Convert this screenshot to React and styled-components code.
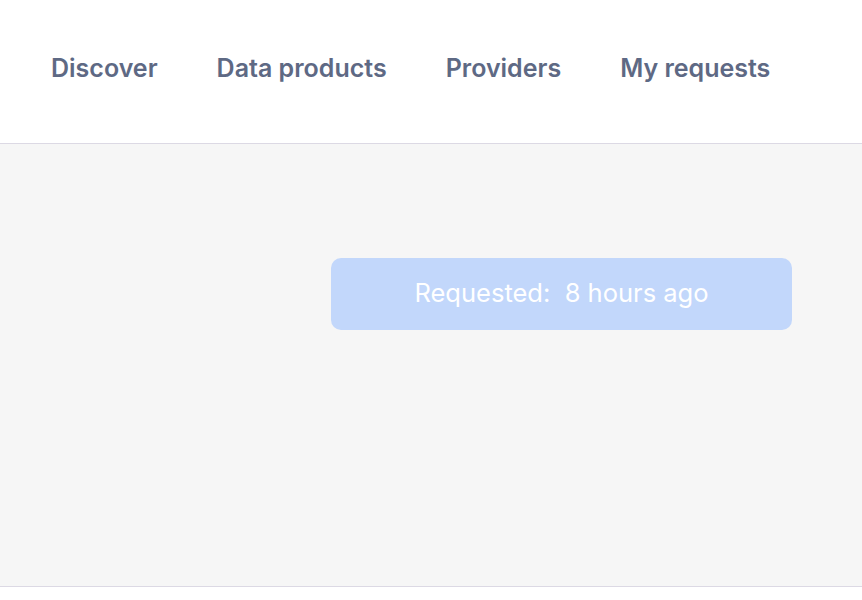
import styled, { createGlobalStyle } from 'styled-components';

const GlobalStyle = createGlobalStyle`
	body {
		margin: 0;
		background: #ffffff;
		font-family: Inter, 'Noto Sans', sans-serif;
	}
`;

const Header = styled.header`
	display: flex;
	align-items: center;
	height: 143px;
	padding-left: 51px;
	background: #ffffff;
	border-bottom: 1px solid #dcd9e4;
`;

const Nav = styled.nav`
	display: flex;
	gap: 59px;
	margin-top: -8px;
`;

const NavLink = styled.a`
	font-size: 25px;
	font-weight: 600;
	color: #5e6984;
	text-decoration: none;
	cursor: pointer;
`;

const Main = styled.main`
	display: flex;
	justify-content: flex-start;
	height: 443px;
	padding: 114px 0 0 331px;
	box-sizing: border-box;
	background: #f6f6f6;
	border-bottom: 1px solid #dcd9e4;
`;

const StatusButton = styled.button`
	width: 461px;
	height: 72px;
	padding: 0 0 3px;
	border: none;
	border-radius: 10px;
	background: #c2d7fb;
	color: #ffffff;
	font-family: Inter, 'Noto Sans', sans-serif;
	font-size: 25.5px;
	font-weight: 400;
	white-space: pre;
	cursor: default;
`;

const links = ['Discover', 'Data products', 'Providers', 'My requests'];

export default function App() {
	return (
		<>
			<GlobalStyle />
			<Header>
				<Nav>
					{links.map((label) => (
						<NavLink key={label}>{label}</NavLink>
					))}
				</Nav>
			</Header>
			<Main>
				<StatusButton disabled>{'Requested:  8 hours ago'}</StatusButton>
			</Main>
		</>
	);
}
